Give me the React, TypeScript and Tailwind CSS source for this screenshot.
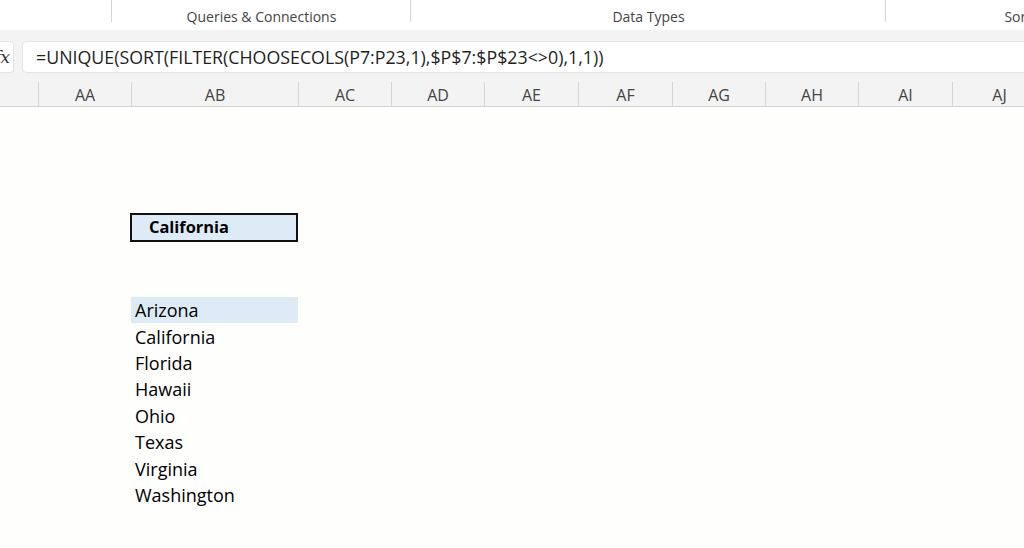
const columns = [
  { label: "", w: "w-[38px]" },
  { label: "AA", w: "w-[93px]" },
  { label: "AB", w: "w-[167px]" },
  { label: "AC", w: "w-[93px]" },
  { label: "AD", w: "w-[93px]" },
  { label: "AE", w: "w-[94px]" },
  { label: "AF", w: "w-[94px]" },
  { label: "AG", w: "w-[93px]" },
  { label: "AH", w: "w-[93px]" },
  { label: "AI", w: "w-[94px]" },
  { label: "AJ", w: "w-[94px]" },
];

const states = ["Arizona", "California", "Florida", "Hawaii", "Ohio", "Texas", "Virginia", "Washington"];

const RibbonGroup = ({ label, w }: { label: string; w: string }) => (
  <div className={`relative flex h-full shrink-0 items-end justify-center ${w}`}>
    <span className="pb-[6px] text-[14px] leading-none text-[#444]">{label}</span>
    <div className="absolute right-0 top-0 h-[22px] w-px bg-[#d4d4d4]" />
  </div>
);

export default function App() {
  return (
    <div className="h-[548px] w-[1024px] overflow-hidden bg-[#fefefd] font-['Open_Sans',sans-serif]">
      {/* ribbon group labels */}
      <div className="flex h-[30px] overflow-hidden bg-white shadow-[0_1px_2px_rgba(0,0,0,0.06)]">
        <RibbonGroup label="" w="w-[112px]" />
        <RibbonGroup label="Queries & Connections" w="w-[299px]" />
        <RibbonGroup label="Data Types" w="w-[475px]" />
        <RibbonGroup label="Sort & Filter" w="w-[314px]" />
      </div>

      <div className="bg-[#f3f3f3]">
        {/* formula bar */}
        <div className="flex h-[43px] items-end gap-[8px]">
          <div className="-ml-[16px] flex h-[32px] w-[30px] items-center justify-end rounded-[4px] border border-[#e3e3e3] bg-white pr-[3px]">
            <span className="font-['DejaVu_Serif',serif] text-[17px] italic leading-none text-[#333]">fx</span>
          </div>
          <div className="flex h-[32px] flex-1 items-center rounded-l-[5px] border border-r-0 border-[#e3e3e3] bg-white pl-[13px] pt-[2px]">
            <span className="text-[17.8px] leading-none text-[#1f1f1f]">
              =UNIQUE(SORT(FILTER(CHOOSECOLS(P7:P23,1),$P$7:$P$23&lt;&gt;0),1,1))
            </span>
          </div>
        </div>

        {/* column headers */}
        <div className="flex h-[34px] items-end border-b border-[#d2d2d2]">
          {columns.map((c, i) => (
            <div
              key={i}
              className={`flex h-[24px] shrink-0 items-center justify-center pt-[2px] text-[16px] text-[#444] ${c.w} ${i > 0 ? "border-l border-[#d6d6d6]" : ""}`}
            >
              {c.label}
            </div>
          ))}
        </div>
      </div>

      {/* cells */}
      <div className="flex">
        <div className="w-[130px] shrink-0" />
        <div className="w-[168px] shrink-0 pt-[106px]">
          <div className="flex h-[29px] items-center border-2 border-[#111] bg-[#ddebf7] pl-[17px] text-[16.4px] font-bold text-black">
            California
          </div>
          <div className="mt-[55px] pl-px">
            {states.map((s, i) => (
              <div
                key={s}
                className={`flex h-[26.4px] items-center pl-[4px] pt-[1px] text-[18px] text-black ${i === 0 ? "bg-[#ddebf7]" : ""}`}
              >
                {s}
              </div>
            ))}
          </div>
        </div>
      </div>
    </div>
  );
}
